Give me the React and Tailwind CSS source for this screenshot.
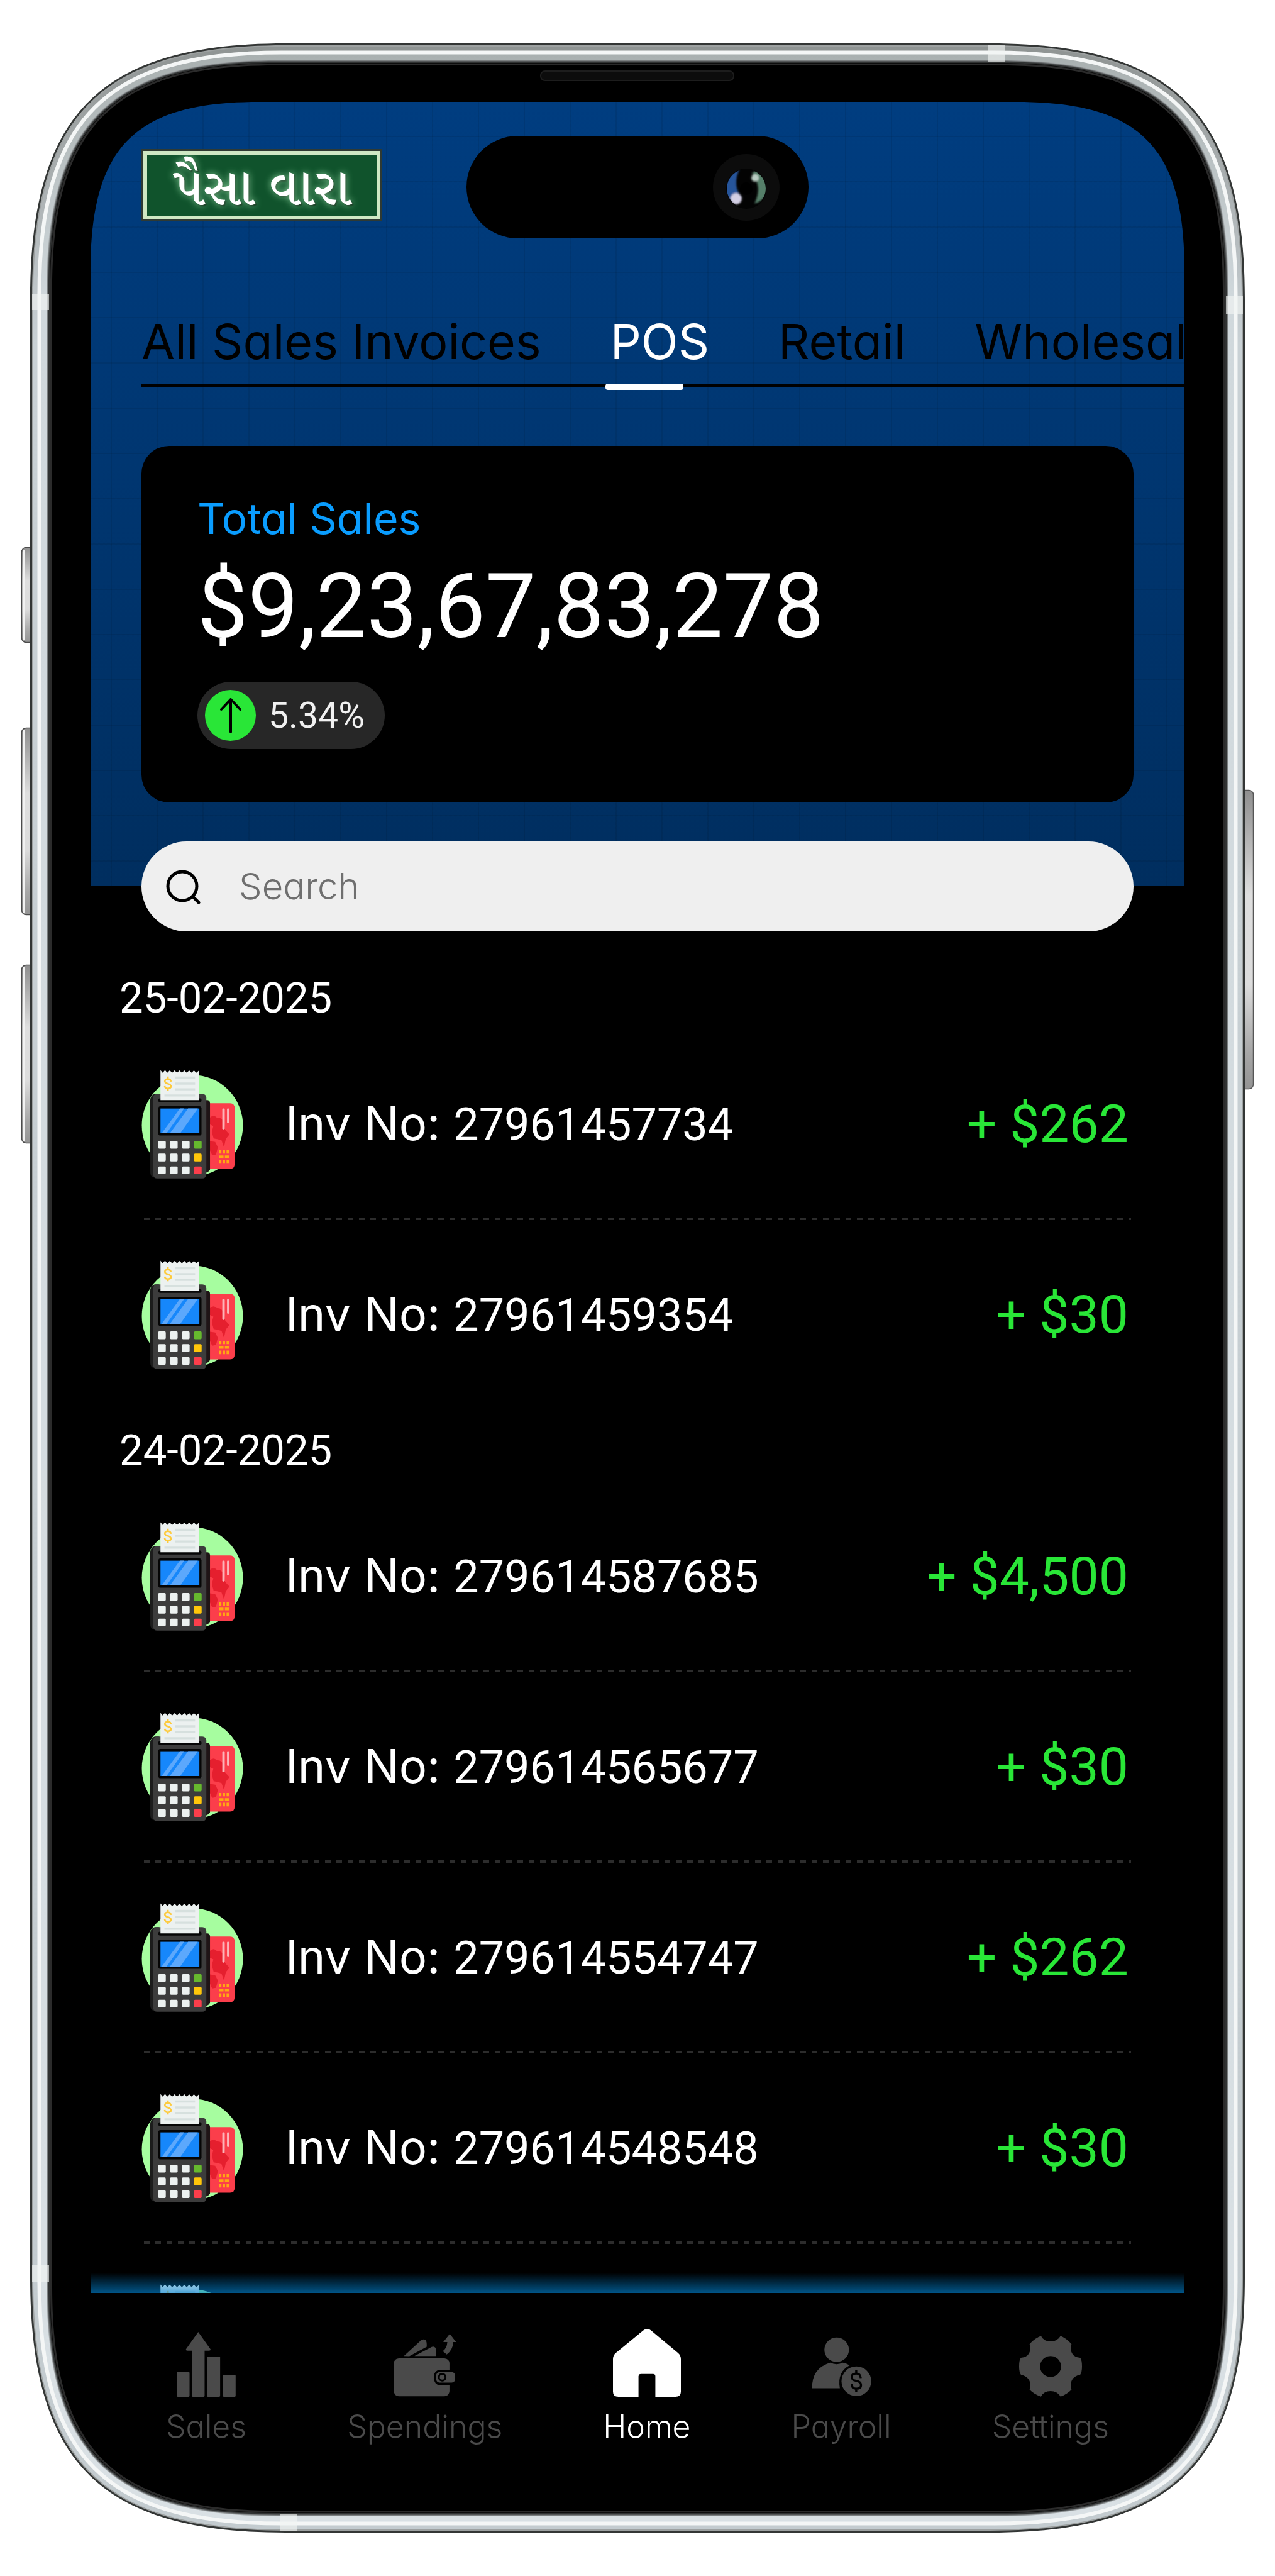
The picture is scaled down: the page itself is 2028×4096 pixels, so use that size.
import React, { useState } from "react";

const tabs = ["All Sales Invoices", "POS", "Retail", "Wholesale"];

const groups = [
  {
    date: "25-02-2025",
    invoices: [
      { no: "27961457734", amount: "$262" },
      { no: "27961459354", amount: "$30" },
    ],
  },
  {
    date: "24-02-2025",
    invoices: [
      { no: "279614587685", amount: "$4,500" },
      { no: "279614565677", amount: "$30" },
      { no: "279614554747", amount: "$262" },
      { no: "279614548548", amount: "$30" },
      { no: "279614532210", amount: "$262" },
    ],
  },
];

// rounded outline with long, soft corners like the phone body
const squircle = (l, t, r, b, e, c) =>
  `M${l} ${t + e}C${l} ${t + c} ${l + c} ${t} ${l + e} ${t}H${r - e}` +
  `C${r - c} ${t} ${r} ${t + c} ${r} ${t + e}V${b - e}` +
  `C${r} ${b - c} ${r - c} ${b} ${r - e} ${b}H${l + e}` +
  `C${l + c} ${b} ${l} ${b - c} ${l} ${b - e}Z`;

const body = (d) =>
  squircle(48 + d, 69 + d, 1980 - d, 4027 - d, 406 - 1.44 * d, 112 - 0.43 * d);

const screenHole =
  "M144 430C144 233 215 162 412 162H1616C1813 162 1884 233 1884 430V3780L1784 3918H244L144 3780Z";

const bodyLayers = [
  [0, "#333635"],
  [3, "#9da1a1"],
  [5, "url(#metal)"],
  [17, "url(#innerMetal)"],
  [26, "#a3a8aa"],
  [27, "#7b7f80"],
  [28, "#545758"],
  [29, "#303232"],
  [31, "#0d0d0d"],
  [32, "#2b2b2b"],
  [35, "#000"],
];

const PhoneFrame = () => (
  <svg
    className="pointer-events-none absolute inset-0 h-full w-full"
    viewBox="0 0 2028 4096"
    preserveAspectRatio="none"
    aria-hidden="true"
  >
    <defs>
      <linearGradient id="metal" x1="0" y1="0" x2="0" y2="1">
        <stop offset="0" stopColor="#8f9493" />
        <stop offset="0.04" stopColor="#a3a8a9" />
        <stop offset="0.12" stopColor="#c9d1d5" />
        <stop offset="1" stopColor="#c3cbcf" />
      </linearGradient>
      <linearGradient id="innerMetal" x1="0" y1="0" x2="0" y2="1">
        <stop offset="0" stopColor="#a9b0b0" />
        <stop offset="0.1" stopColor="#d0d8dc" />
        <stop offset="1" stopColor="#d9e0e4" />
      </linearGradient>
      <linearGradient id="key" x1="0" y1="0" x2="0" y2="1">
        <stop offset="0" stopColor="#8f8f8f" />
        <stop offset="0.12" stopColor="#a9a9a9" />
        <stop offset="0.35" stopColor="#dedede" />
        <stop offset="0.65" stopColor="#dcdcdc" />
        <stop offset="0.88" stopColor="#a6a6a6" />
        <stop offset="1" stopColor="#949494" />
      </linearGradient>
    </defs>

    {[
      [870, 152],
      [1157, 298],
      [1534, 284],
    ].map(([y, h]) => (
      <g key={y}>
        <rect x="34.5" y={y + 0.5} width="24" height={h - 1} rx="7" fill="url(#key)" stroke="#4c4c4c" strokeWidth="1.5" />
        <rect x="37" y={y + 4} width="3" height={h - 8} fill="#f1f1f1" />
      </g>
    ))}
    <rect x="1966" y="1256.5" width="27.5" height="475" rx="7" fill="url(#key)" stroke="#565656" strokeWidth="1.5" />

    {/* each metal layer stops at the next one, only the last reaches the screen */}
    {bodyLayers.map(([inset, fill]) => (
      <path
        key={inset}
        fillRule="evenodd"
        d={body(inset) + (inset === 35 ? screenHole : body(40))}
        fill={fill}
      />
    ))}
    <path d={body(14.5)} fill="none" stroke="#f4f6f6" strokeWidth="6" />

    {/* antenna bands */}
    <g fill="#f1f5f3" opacity="0.65">
      <rect x="51" y="467" width="27" height="26" />
      <rect x="1950" y="471" width="27" height="28" />
      <rect x="1572" y="72" width="27" height="27" />
      <rect x="445" y="3998" width="27" height="27" />
      <rect x="51" y="3601" width="27" height="27" />
    </g>

    <rect x="860" y="113" width="307" height="15" rx="7" fill="#0c0c0c" stroke="#1d1d1d" strokeWidth="2" />
  </svg>
);

const CameraIsland = () => (
  <div className="absolute left-1/2 top-[216px] flex h-[163px] w-[544px] -translate-x-1/2 items-center justify-end rounded-full bg-black pr-[46px]">
    <svg className="size-[106px]" viewBox="0 0 106 106" aria-hidden="true">
      <defs>
        <filter id="soft" x="-50%" y="-50%" width="200%" height="200%">
          <feGaussianBlur stdDeviation="1.6" />
        </filter>
        <clipPath id="lens">
          <circle cx="53" cy="55" r="31" />
        </clipPath>
      </defs>
      <circle cx="53" cy="53" r="53" fill="#0c0c0c" />
      <circle cx="53" cy="55" r="32" fill="#030303" />
      <g clipPath="url(#lens)">
        <g filter="url(#soft)">
          <path d="M42 24C24 30 18 44 20 60C22 72 30 80 42 78L46 68C36 58 34 42 42 24Z" fill="#27549b" />
          <path d="M62 30C72 44 76 58 66 79C80 74 88 66 86 50C84 40 78 30 68 27Z" fill="#557f69" />
          <ellipse cx="37" cy="71" rx="9" ry="9" fill="#d3cfe4" />
          <circle cx="67" cy="38" r="6" fill="#b9cdc3" />
        </g>
      </g>
      <circle cx="53" cy="55" r="10" fill="#000" />
    </svg>
  </div>
);

const TerminalIcon = () => (
  <svg className="h-[173px] w-[162px] shrink-0" viewBox="86 70 668 716" aria-hidden="true">
    <circle cx="420" cy="437" r="333" fill="#a6fd9f" />
    <path d="M143 265V616L180 720L500 786V660Z" fill="#000" />
    <path d="M86 616H162V786H86Z" fill="#000" />
    <path d="M690 620H760V786H590V722Z" fill="#000" />
    <path d="M510 290H668Q698 290 698 322V690Q698 722 668 722H510Z" fill="#fb3e4b" />
    <path d="M536 385Q560 362 580 385Q612 380 630 420L636 465L664 495L640 525L628 580L612 535Q590 525 560 522L548 480L558 440L536 430Z" fill="#e51f2e" />
    <path d="M536 540L570 545L588 580L575 628L550 632L536 600Z" fill="#e51f2e" />
    <rect x="617" y="325" width="16" height="137" rx="6" fill="#fdb4b9" />
    <rect x="648" y="325" width="14" height="97" rx="6" fill="#fdb4b9" />
    <path d="M597 600h14v22h-14zM620 600h15v22h-15zM645 600h17v22h-17zM597 634h28v18h-28zM634 634h28v18h-28zM597 664h14v24h-14zM620 664h15v24h-15zM645 664h17v24h-17z" fill="#ffa812" />
    <path d="M505 270H520Q536 272 536 290V725Q530 742 505 748Z" fill="#1f1416" />
    <path d="M143 262Q148 236 172 228H200V780H170Q143 776 143 745Z" fill="#1c1c1c" />
    <rect x="162" y="228" width="350" height="557" rx="26" fill="#3c3c3c" />
    <rect x="196" y="258" width="284" height="26" rx="10" fill="#060606" />
    <path d="M210 72L224 90L240 72L255 90L271 74L287 90L303 74L319 90L335 74L351 90L367 74L383 90L399 74L415 90L430 74L446 90L464 74V270H210Z" fill="#ecf1f0" />
    <path d="M304 122H438M304 161H438M304 199H438M236 239H438" stroke="#d6e0de" strokeWidth="14" />
    <path d="M279 148Q277 131 259 131Q239 131 239 146Q239 158 259 162Q279 167 279 180Q279 193 259 193Q239 193 238 177M259 115V131M259 193V208" fill="none" stroke="#fdcb3f" strokeWidth="11" />
    <rect x="196" y="310" width="284" height="193" rx="14" fill="#050505" />
    <rect x="210" y="325" width="256" height="163" fill="#1687fb" />
    <path d="M338 325H366L250 488H218Z" fill="#5ca8fc" />
    <path d="M392 325H456L340 488H272Z" fill="#5ca8fc" />
    {[538, 622, 706].map((y, i) => (
      <g key={y} fill="#ecf1f0">
        <rect x="194" y={y} width="51" height="51" rx="8" />
        <rect x="272" y={y} width="51" height="51" rx="8" />
        <rect x="351" y={y} width="51" height="51" rx="8" />
        <rect x="430" y={y} width="51" height="51" rx="8" fill={["#66b92e", "#ffc60a", "#fb3e4b"][i]} />
      </g>
    ))}
  </svg>
);

const SalesIcon = () => (
  <svg className="h-[103px] w-[94px]" viewBox="0 0 129 142" fill="currentColor" aria-hidden="true">
    <rect y="88" width="28" height="54" rx="2" />
    <path d="M47 0L74 38Q74 41 71 41H61V140Q61 142 59 142H35Q33 142 33 140V41H23Q20 41 20 38Z" />
    <rect x="66" y="54" width="29" height="88" rx="2" />
    <rect x="101" y="94" width="28" height="48" rx="2" />
  </svg>
);

const SpendingsIcon = () => (
  <svg className="size-[100px]" viewBox="46 60 415 415" fill="currentColor" aria-hidden="true">
    <path d="M114 206L226 104Q244 90 258 102Q266 110 265 145L150 207Z" />
    <path d="M184 206L298 146Q312 140 321 150Q327 158 326 172V206Z" />
    <path d="M80 222H382Q413 224 415 254V298H350Q316 302 314 335V362Q318 396 350 398H415V438Q413 470 382 472H80Q50 470 48 438V254Q50 224 80 222Z" />
    <path fillRule="evenodd" d="M350 312H430Q452 314 452 336V358Q452 380 430 382H350Q328 380 327 358V336Q328 314 350 312ZM367 318a28 28 0 1 0 .1 0Z" />
    <circle cx="367" cy="346" r="16" />
    <path d="M417 60L459 114H440Q438 165 397 196L371 174Q398 155 401 114H374Z" />
  </svg>
);

const HomeIcon = () => (
  <svg className="size-[108px]" viewBox="0 0 149 149" fill="currentColor" aria-hidden="true">
    <path d="M67 3Q75 -3 83 3L143 53Q149 58 149 67V138Q149 149 137 149H93V104Q93 99 88 99H61Q56 99 56 104V149H12Q0 149 0 138V67Q0 58 6 53Z" />
  </svg>
);

const PayrollIcon = () => (
  <svg className="size-[95px]" viewBox="38 45 394 394" fill="currentColor" aria-hidden="true">
    <circle cx="203" cy="129" r="81" />
    <path d="M41 383Q38 252 160 214Q203 234 244 214Q270 220 289 232Q205 275 224 383Z" />
    <circle cx="333" cy="337" r="98" />
    <path d="M362 316Q360 286 332 286Q302 286 302 308Q302 328 332 334Q364 341 364 362Q364 386 332 386Q302 386 302 354M332 264V288M332 384V407" fill="none" stroke="#000" strokeWidth="14" />
  </svg>
);

const SettingsIcon = () => (
  <svg className="h-[97px] w-[100px]" viewBox="0 0 138 133" fill="currentColor" aria-hidden="true">
    <path
      fillRule="evenodd"
      d="M48 0Q54 12 69 12Q84 12 91 0Q104 5 115 18Q111 29 116 38Q121 47 134 48Q138 52 138 67Q138 80 134 85Q120 88 116 97Q111 106 115 118Q104 129 91 133Q84 121 69 121Q54 121 48 133Q34 129 23 118Q27 106 22 97Q17 88 4 85Q0 80 0 67Q0 52 4 48Q17 47 22 38Q27 29 23 18Q34 5 48 0ZM69 44a23 23 0 1 0 .1 0Z"
    />
  </svg>
);

const navItems = [
  { label: "Sales", Icon: SalesIcon },
  { label: "Spendings", Icon: SpendingsIcon },
  { label: "Home", Icon: HomeIcon },
  { label: "Payroll", Icon: PayrollIcon },
  { label: "Settings", Icon: SettingsIcon },
];

const InvoiceRow = ({ invoice, last }) => (
  <li className="px-[81px]">
    <div className="flex items-center pb-[62px] pt-16">
      <TerminalIcon />
      <span className="ml-[67px] text-[72px] leading-[90px] text-white">
        <span className="font-['Inter',sans-serif] text-[74px]">Inv No: </span>
        {invoice.no}
      </span>
      <span className="ml-auto pr-2 text-[84px] leading-[90px] text-[#29e637]">
        + {invoice.amount}
      </span>
    </div>
    {!last && (
      <div className="mx-1 h-1 bg-[repeating-linear-gradient(90deg,#2c2c2c_0_9px,transparent_9px_18px)]" />
    )}
  </li>
);

const App = () => {
  const [activeTab, setActiveTab] = useState("POS");
  const [query, setQuery] = useState("");

  return (
    <div className="relative flex h-screen flex-col bg-white font-['Roboto',sans-serif]">
      <div className="relative mx-[144px] mb-[176px] mt-[162px] flex min-h-0 flex-1 flex-col">
        <header className="bg-[linear-gradient(180deg,#003d80,#002e5f)]">
          <div className="bg-[repeating-linear-gradient(90deg,transparent_0_32px,#00000014_32px_34px,transparent_34px_73px),repeating-linear-gradient(180deg,transparent_0_54px,#00000014_54px_56px,transparent_56px_72px)] pb-[133px] pt-[75px]">
            <div className="ml-[81px] flex h-[115px] w-[383px] items-center justify-center border-4 border-[#2f3a33] bg-[#10532c] pt-4 outline-6 -outline-offset-9 outline-[#cfe8c4]">
              <span className="font-['Noto_Serif_Gujarati','Noto_Sans_Gujarati','Noto_Sans',serif] text-[84px] font-medium leading-[90px] text-white [text-shadow:0_0_12px_#8fd6a0,2px_2px_2px_#06200f]">
                પૈસા વારા
              </span>
            </div>

            <div className="ml-[81px] mt-[146px] overflow-hidden pb-[6px]">
              <nav className="flex w-max min-w-full gap-[110px] border-b-4 border-black pb-[23px] font-['Inter',sans-serif] text-[77px] leading-[90px] [font-feature-settings:'cv11']">
                {tabs.map((tab) => (
                  <button
                    key={tab}
                    type="button"
                    onClick={() => setActiveTab(tab)}
                    className={
                      tab === activeTab
                        ? "relative text-white"
                        : "relative text-black"
                    }
                  >
                    {tab}
                    {tab === activeTab && (
                      <span className="absolute -bottom-8 -left-2 h-[10px] w-[124px] rounded-sm bg-white" />
                    )}
                  </button>
                ))}
              </nav>
            </div>

            <section className="mx-[81px] mt-[88px] rounded-[44px] bg-black px-[89px] pb-[85px] pt-[83px]">
              <h2 className="font-['Inter',sans-serif] text-[68px] leading-[64px] text-[#0a9dff] [font-feature-settings:'cv11']">
                Total Sales
              </h2>
              <p className="mt-[33px] text-[143px] leading-[150px] text-white">
                $9,23,67,83,278
              </p>
              <div className="mt-[45px] flex h-[107px] w-max items-center rounded-full bg-[#272727] pl-3 pr-8">
                <span className="flex size-[81px] items-center justify-center rounded-full bg-[#29e637]">
                  <svg className="h-14 w-9" viewBox="0 0 36 56" fill="none" stroke="#000" strokeWidth="4" strokeLinecap="round" strokeLinejoin="round" aria-hidden="true">
                    <path d="M18 54V3M3 18L18 2L33 18" />
                  </svg>
                </span>
                <span className="ml-5 text-[57px] leading-[64px] text-[#f1f1f1]">
                  5.34%
                </span>
              </div>
            </section>
          </div>
        </header>

        <div className="flex min-h-0 flex-1 flex-col bg-black">
          <label className="relative mx-[81px] -mt-[71px] flex h-[143px] shrink-0 items-center rounded-full bg-[#efefef] pl-[39px] pr-16">
            <svg className="size-[56px] shrink-0" viewBox="0 0 56 56" fill="none" stroke="#000" strokeWidth="5" strokeLinecap="round" aria-hidden="true">
              <circle cx="26" cy="27" r="23" />
              <path d="M43 44L52 53" />
            </svg>
            <input
              type="text"
              aria-label="Search"
              value={query}
              onChange={(e) => setQuery(e.target.value)}
              placeholder="Search"
              className="ml-[60px] h-20 min-w-0 flex-1 bg-transparent font-['Inter',sans-serif] text-[58px] font-light text-black outline-none [font-feature-settings:'cv11'] placeholder:text-[#6f6f6f]"
            />
          </label>

          <div className="relative mt-[43px] min-h-0 flex-1 overflow-hidden">
            {groups.map((group) => (
              <section key={group.date} className="mb-1">
                <h3 className="pb-[18px] pl-[46px] pt-[31px] text-[67px] leading-[64px] text-white">
                  {group.date}
                </h3>
                <ul>
                  {group.invoices.map((invoice, i) => (
                    <InvoiceRow
                      key={invoice.no}
                      invoice={invoice}
                      last={i === group.invoices.length - 1}
                    />
                  ))}
                </ul>
              </section>
            ))}
            <div className="absolute inset-x-0 bottom-0 h-8 bg-linear-to-b from-transparent to-[#0082d1]/65" />
          </div>
        </div>

        <nav className="relative flex shrink-0 items-end justify-between bg-black px-[120px] pb-10 pt-[57px] font-['Inter',sans-serif] [font-feature-settings:'cv11']">
          {navItems.map(({ label, Icon }) => (
            <a
              key={label}
              href={"#" + label.toLowerCase()}
              className={
                label === "Home"
                  ? "flex flex-col items-center text-white"
                  : "flex flex-col items-center text-[#4a4a4a]"
              }
            >
              <Icon />
              <span className="mt-[25px] text-[50px] font-light leading-[44px]">
                {label}
              </span>
            </a>
          ))}
        </nav>
      </div>

      <PhoneFrame />
      <CameraIsland />
    </div>
  );
};

export default App;
